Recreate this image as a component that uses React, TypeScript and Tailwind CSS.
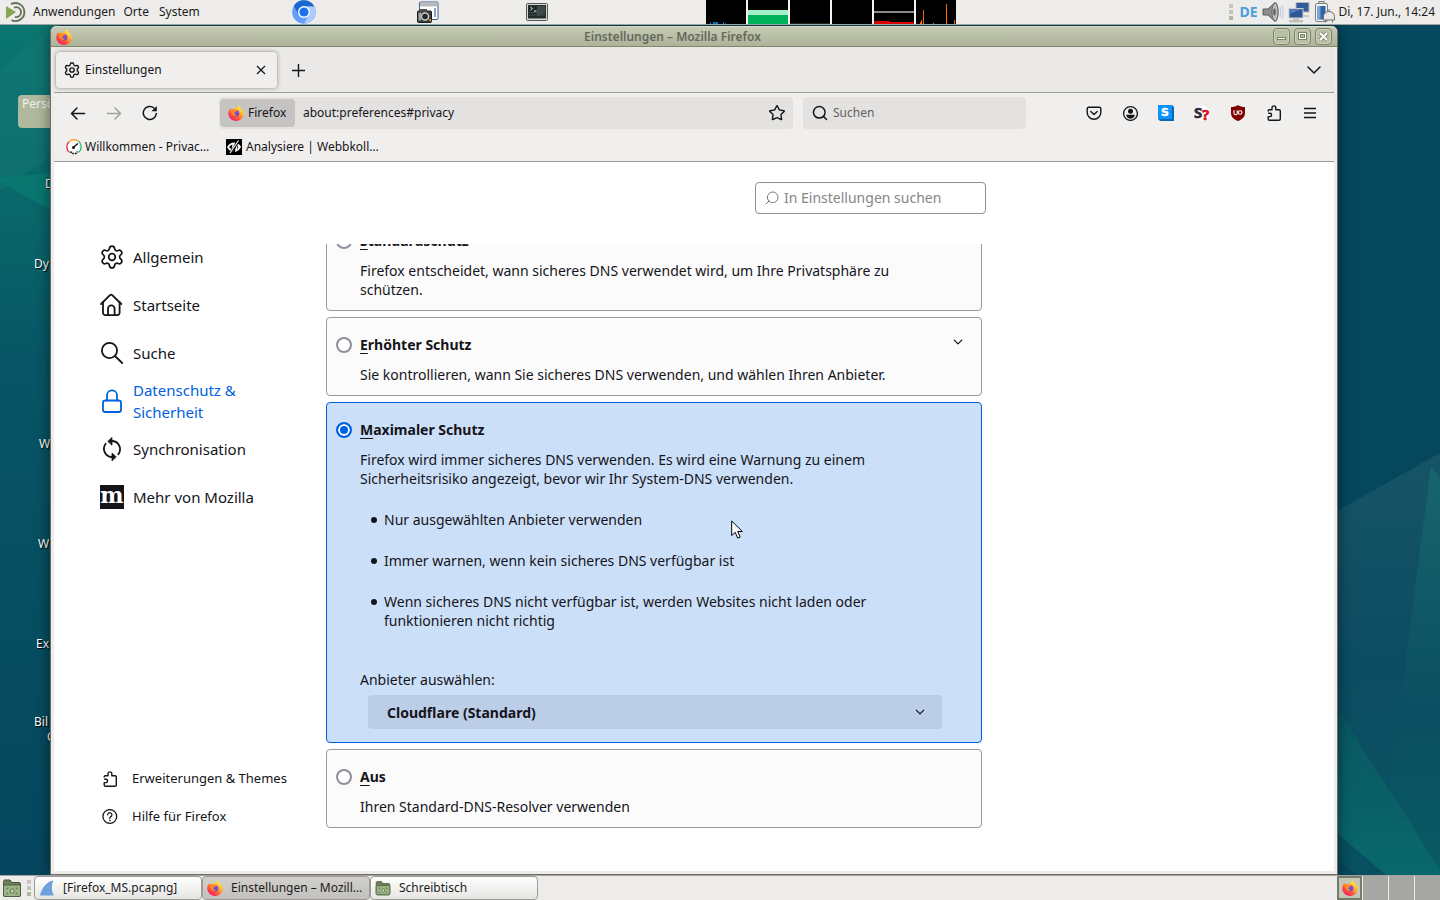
import type { ReactNode } from "react";
import { Search, Settings, Star } from "lucide-react";

function FirefoxLogo({ className }: { className: string }) {
  return (
    <svg viewBox="0 0 16 16" className={className} aria-hidden="true">
      <defs>
        <linearGradient id="fxBody" x1="0.85" y1="0.1" x2="0.2" y2="0.95">
          <stop offset="0" stopColor="#fff44f" />
          <stop offset="0.35" stopColor="#ffb02a" />
          <stop offset="0.65" stopColor="#ff5b36" />
          <stop offset="1" stopColor="#f5156c" />
        </linearGradient>
        <linearGradient id="fxGlobe" x1="0.7" y1="0" x2="0.3" y2="1">
          <stop offset="0" stopColor="#a049e0" />
          <stop offset="1" stopColor="#5141cf" />
        </linearGradient>
      </defs>
      <path
        d="M10.6 0c.3 1.300 1 2 1.900 2.900 1.700 1.500 3.400 3.300 3.400 5.700A7.800 7.400 0 0 1 .2 8.600C.2 6.500 1 4.800 2.200 3.200l.3 1.300 1-1.500L4 4.400c.6-.3 1.300-.4 2-.3C6.800 3.200 8.700 3.100 9 2.200 9.200 1.300 10 .6 10.600 0z"
        fill="url(#fxBody)"
      />
      <circle cx="8" cy="8.200" r="3.300" fill="url(#fxGlobe)" />
      <path
        d="M3.200 4.500c1.200-.6 2.900-.5 3.800.4 1 .1 1.900.2 2 .5 0 .6-1.100.9-1.400 1.300-.3.400-.3 1-1.300 1.100 0 1.600 1.700 2.500 3.300 1.700-1.600 2.300-5.200 1.600-6.100-1.200C3 7.400 2.600 5.500 3.200 4.500z"
        fill="#ff8a1e"
      />
      <path d="M9.300 3.200c2.600.9 4 3.300 3.300 5.700.1-1.500-.7-2.700-1.800-3.300-1-.5-1.700-1.300-1.500-2.400z" fill="#ffd23c" />
    </svg>
  );
}

function PuzzleIcon({ className }: { className: string }) {
  return (
    <svg viewBox="0 0 16 16" className={className} fill="none" stroke="currentColor" strokeWidth="1.400" strokeLinejoin="round" aria-hidden="true">
      <path d="M2.200 6.600V5.700a1 1 0 0 1 1-1H6V2.800a1.900 1.900 0 0 1 3.800 0v1.900h3.200a1.300 1.300 0 0 1 1.300 1.300v8a1.300 1.300 0 0 1-1.300 1.300H3.500A1.300 1.300 0 0 1 2.200 14v-2.400h1.700a1.650 1.650 0 0 0 0-3.300H2.200" />
    </svg>
  );
}

function Chevron({ className }: { className: string }) {
  return (
    <svg viewBox="0 0 16 16" className={className} fill="none" stroke="currentColor" strokeWidth="1.500" strokeLinecap="round" strokeLinejoin="round" aria-hidden="true">
      <path d="M2 5l6 6 6-6" />
    </svg>
  );
}

function FolderIcon({ className }: { className: string }) {
  return (
    <svg viewBox="0 0 20 20" className={className} aria-hidden="true">
      <path d="M1.500 3.500a1.500 1.500 0 0 1 1.500-1.500h5l2 2.500h7a1.500 1.500 0 0 1 1.500 1.500v11a1.500 1.500 0 0 1-1.500 1.500H3A1.500 1.500 0 0 1 1.500 17z" fill="#6c8058" stroke="#44543a" />
      <rect x="1.500" y="7" width="17" height="11.500" rx="1.500" fill="#9db585" stroke="#4e6042" />
      <path d="M5 11.500V10h1.500M13.500 10H15v1.500M15 14.500V16h-1.500M6.500 16H5v-1.500" fill="none" stroke="#5f7450" />
      <rect x="8.500" y="11" width="3.500" height="4" rx="1" fill="#c5d6b2" stroke="#5f7450" />
    </svg>
  );
}

function Wallpaper() {
  return (
    <svg viewBox="0 0 1440 850" preserveAspectRatio="none" className="absolute inset-0 h-full w-full" aria-hidden="true">
      <defs>
        <linearGradient id="wpLeft" x1="0" y1="0" x2="0" y2="1">
          <stop offset="0" stopColor="#0a7670" />
          <stop offset="0.2" stopColor="#09686a" />
          <stop offset="0.4" stopColor="#075565" />
          <stop offset="0.75" stopColor="#064c60" />
          <stop offset="1" stopColor="#05465e" />
        </linearGradient>
        <linearGradient id="wpHill" x1="0" y1="0" x2="0" y2="1">
          <stop offset="0" stopColor="#175467" />
          <stop offset="0.5" stopColor="#0c4c62" />
          <stop offset="1" stopColor="#0a5362" />
        </linearGradient>
        <linearGradient id="wpPeak" x1="0" y1="0" x2="0" y2="1">
          <stop offset="0" stopColor="#17656d" />
          <stop offset="0.6" stopColor="#0a4f62" />
          <stop offset="1" stopColor="#0a5a64" />
        </linearGradient>
        <linearGradient id="wpFoot" x1="0" y1="0" x2="0" y2="1">
          <stop offset="0" stopColor="#0a5562" />
          <stop offset="1" stopColor="#08686a" />
        </linearGradient>
      </defs>
      <rect width="1440" height="850" fill="#05475d" />
      <rect width="60" height="850" fill="url(#wpLeft)" />
      <path d="M0 45 55 0H60V125L0 165z" fill="#1b7c78" opacity="0.35" />
      <path d="M0 153 60 147V190L0 157z" fill="#0a7a70" opacity="0.8" />
      <path d="M1330 490 1440 428V850H1330z" fill="url(#wpHill)" />
      <path d="M1431 441 1440 453V850H1380L1395 720z" fill="url(#wpPeak)" />
      <path d="M1330 670 1349 702 1440 845V850H1330z" fill="url(#wpFoot)" />
      <path d="M1330 802 1386 850H1330z" fill="#075061" />
      <path d="M1330 831 1358 850H1330z" fill="#06475c" />
    </svg>
  );
}

const desktopLabels = [
  { text: "D", place: "left-[45px] top-[151px]" },
  { text: "Dy", place: "left-[34px] top-[231px]" },
  { text: "W", place: "left-[39px] top-[411px]" },
  { text: "W", place: "left-[38px] top-[511px]" },
  { text: "Ex", place: "left-[36px] top-[611px]" },
  { text: "Bil", place: "left-[34px] top-[689px]" },
  { text: "C", place: "left-[47px] top-[704px]" },
];

function Grip() {
  return (
    <span className="flex w-1 flex-col gap-0.5" aria-hidden="true">
      <span className="h-1 bg-[#c6c5c2]" />
      <span className="h-1 bg-[#c2c6b8]" />
      <span className="h-1 bg-[#b2b89f]" />
    </span>
  );
}

function SystemMonitor() {
  return (
    <svg viewBox="0 0 250 24" className="ml-[158px] h-6 w-[250px]" shapeRendering="crispEdges" role="img" aria-label="Systemmonitor">
      <rect width="250" height="24" fill="#f4f3f2" />
      {[0, 42, 84, 126, 168, 210].map((x) => (
        <rect key={x} x={x} width="40" height="24" fill="#000" />
      ))}
      <path d="M4 22h1v2H4zM7 22h4v2H7zM11 22h1v2h-1zM17 22h1v2h-1zM19 23h1v1h-1z" fill="#0b74b8" />
      <rect x="42" y="10" width="40" height="5" fill="#a5efc8" />
      <rect x="42" y="15" width="40" height="9" fill="#00b35b" />
      <rect x="84" y="23" width="40" height="1" fill="#2a2418" />
      <rect x="168" y="11" width="40" height="2" fill="#8a8a8a" />
      <path d="M168 21h16v1h24v2h-40z" fill="#dd0000" />
      <path d="M217 10h1v14h-1zM240 4h1v20h-1zM215 20h1v4h-1zM227 23h1v1h-1zM248 20h1v4h-1zM214 22h1v2h-1z" fill="#f96a00" />
    </svg>
  );
}

function TopPanel() {
  return (
    <header className="flex h-[25px] shrink-0 items-center border-b border-[#a3a29f] bg-[#edecea] text-xs text-[#1c1c1c]">
      <nav className="flex w-[292px] items-center pl-1.5" aria-label="Hauptmenü">
        <svg viewBox="0 0 20 20" className="mr-[7px] h-5 w-5" fill="none" aria-hidden="true">
          <path d="M0 4l10 6-10 7z" fill="#87a556" />
          <path d="M5 2.200A9 9 0 1 1 5.500 18.200" stroke="#66755a" strokeWidth="1.900" />
          <path d="M8 5.600A5 5 0 1 1 9 15" stroke="#66755a" strokeWidth="1.900" />
        </svg>
        <button className="mr-2">Anwendungen</button>
        <button className="mr-2.5">Orte</button>
        <button>System</button>
      </nav>
      <button aria-label="Chromium">
        <svg viewBox="0 0 24 24" className="h-6 w-6" aria-hidden="true">
          <circle cx="12" cy="12" r="11.800" fill="#669df6" />
          <path d="M1.800 6A11.800 11.800 0 0 1 22.300 6.500L12 6.300 6.800 14.500z" fill="#1967d2" />
          <path d="M22.300 6.500A11.800 11.800 0 0 1 12 23.800L17 14.800 15.500 6.500z" fill="#aecbfa" />
          <circle cx="12" cy="12" r="6" fill="#fff" />
          <circle cx="12" cy="12" r="4.600" fill="#1a73e8" />
        </svg>
      </button>
      <button className="ml-[101px]" aria-label="Bildschirmfoto">
        <svg viewBox="0 0 22 22" className="h-[22px] w-[22px]" aria-hidden="true">
          <rect x="2.500" y="1" width="18.500" height="17.500" rx="1" fill="#fff" stroke="#3c6197" />
          <rect x="3" y="1.500" width="17.500" height="4" fill="#b9bcba" />
          <path d="M17 7v9h2V7z" fill="#8aa3c2" />
          <rect x="0.500" y="10" width="14" height="11.500" rx="1" fill="#3c3c3a" stroke="#1e1e1e" />
          <rect x="3" y="8" width="7" height="3" fill="#4d4d4b" />
          <circle cx="8" cy="15.500" r="4.300" fill="#c9cbca" />
          <circle cx="8" cy="15.500" r="2.800" fill="#26282a" />
          <rect x="1.500" y="11.500" width="2.500" height="8" fill="#a3a5a2" />
          <rect x="12.500" y="18" width="1.500" height="2" fill="#f2a32b" />
        </svg>
      </button>
      <button className="ml-[87px]" aria-label="Terminal">
        <svg viewBox="0 0 22 18" className="h-[18px] w-[22px]" aria-hidden="true">
          <rect x="0.500" y="0.500" width="21" height="17" rx="1" fill="#d6d8d4" stroke="#535550" />
          <rect x="2.500" y="2.500" width="17" height="12.500" fill="#1f2a2a" stroke="#2c2e2c" />
          <path d="M11 3h8v7l-8 4z" fill="#3d4b4a" />
          <path d="M4.500 4l2 1.500-2 1.500M8 8h2.500" stroke="#e8ebe8" fill="none" />
          <path d="M3 9.500h16M3 12h16" stroke="#3f4f4e" />
        </svg>
      </button>
      <SystemMonitor />
      <div className="ml-auto flex items-center pr-[5px]">
        <Grip />
        <span className="ml-1.5 w-[19px] text-sm font-bold text-[#4a9fdc]">DE</span>
        <svg viewBox="0 0 22 22" className="ml-1 h-[22px] w-[22px]" aria-label="Lautstärke" role="img">
          <path d="M1 8h5l7-6.500c2 1 3 5 3 9.500s-1 8.500-3 9.500L6 14H1z" fill="#8d8d8b" stroke="#5d5d5b" />
          <ellipse cx="13" cy="11" rx="3" ry="9" fill="#bdbdbb" stroke="#6b6b69" />
          <ellipse cx="12.500" cy="11" rx="1.400" ry="3.500" fill="#6b6b69" />
          <path d="M18 6q1.500 5 0 10M20 4q2.500 7 0 14" fill="none" stroke="#b9cbe2" />
        </svg>
        <svg viewBox="0 0 22 22" className="ml-1 h-[22px] w-[22px]" aria-label="Netzwerk" role="img">
          <rect x="8" y="1.500" width="13" height="9.500" fill="#2f5b9b" stroke="#b9bab8" />
          <path d="M11 14h10v2H11z" fill="#c9cac8" />
          <rect x="1" y="7.500" width="14" height="9.500" fill="#2c5694" stroke="#cdcecc" />
          <path d="M1.500 8h13L1.500 13z" fill="#4f7cb9" />
          <path d="M5 17.500h6V19h4v2.500H1V19h4z" fill="#bfc0be" />
        </svg>
        <svg viewBox="0 0 22 22" className="ml-1 h-[22px] w-[22px]" aria-label="Akku" role="img">
          <rect x="5" y="0.500" width="5" height="3" fill="#dcdddb" stroke="#7f807e" />
          <rect x="1.500" y="2.500" width="12" height="18" rx="1.500" fill="#f3f4f3" stroke="#7f807e" />
          <rect x="3.500" y="5" width="8" height="13.500" fill="#2f65a8" />
          <path d="M3.500 5h3v13.500h-3z" fill="#7ba4d3" />
          <path d="M9.500 19v-3.500a5.500 5 0 0 1 11 0V19zM11.500 19v2.500M18.500 19v2.500M15 10V8" fill="#e7e8e6" stroke="#6f706e" />
        </svg>
        <time className="ml-0.5">Di, 17. Jun., 14:24</time>
      </div>
    </header>
  );
}

function TitleButton({ label, children }: { label: string; children: ReactNode }) {
  return (
    <button aria-label={label} className="flex h-[17px] w-[17px] items-center justify-center rounded border border-[#7c8468] bg-[#b9bfa5] shadow-[inset_0_0_0_1px_#ccd1bd]">
      <svg viewBox="0 0 13 13" className="h-[13px] w-[13px]" fill="none" aria-hidden="true">
        {children}
      </svg>
    </button>
  );
}

function TitleBar() {
  return (
    <div className="flex h-[21px] shrink-0 items-center rounded-t-md border-b border-t border-b-[#7f8768] border-t-[#d8dccb] bg-linear-to-b from-[#c6cab5] to-[#adb399] px-[5px]">
      <FirefoxLogo className="h-4 w-4" />
      <h1 className="flex-1 text-center text-xs font-semibold text-[#65695b]">Einstellungen – Mozilla Firefox</h1>
      <div className="flex gap-1">
        <TitleButton label="Minimieren">
          <rect x="2.500" y="7.500" width="8" height="2" fill="#fff" stroke="#7c8468" />
        </TitleButton>
        <TitleButton label="Maximieren">
          <rect x="2.500" y="2.500" width="8" height="7" fill="#fff" stroke="#7c8468" />
          <rect x="4.500" y="4.500" width="4" height="3" fill="#b9bfa5" stroke="#7c8468" />
        </TitleButton>
        <TitleButton label="Schließen">
          <path d="M3 3l7 7M10 3l-7 7" stroke="#7c8468" strokeWidth="3.800" />
          <path d="M3 3l7 7M10 3l-7 7" stroke="#fff" strokeWidth="2" />
        </TitleButton>
      </div>
    </div>
  );
}

function TabStrip() {
  return (
    <div className="flex h-[46px] shrink-0 items-center border-b border-[#9b9b97] bg-[#eae9e7] pl-0.5 pr-3 pt-px">
      <div className="flex h-9 w-[221px] items-center rounded bg-[#f0efed] px-2 shadow-[0_0_4px_rgba(0,0,0,0.4)]">
        <Settings viewBox="1 1 22 22" className="h-4 w-4" strokeWidth={1.900} />
        <span className="ml-[5px] flex-1 text-xs">Einstellungen</span>
        <button aria-label="Tab schließen" className="flex h-4 w-4 items-center justify-center">
          <svg viewBox="0 0 10 10" className="h-[10px] w-[10px]" stroke="currentColor" strokeWidth="1.200" aria-hidden="true">
            <path d="M1 1l8 8M9 1L1 9" />
          </svg>
        </button>
      </div>
      <button aria-label="Neuer Tab" className="ml-[15px]">
        <svg viewBox="0 0 13 13" className="h-[13px] w-[13px]" stroke="currentColor" strokeWidth="1.400" aria-hidden="true">
          <path d="M6.500 0v13M0 6.500h13" />
        </svg>
      </button>
      <button aria-label="Alle Tabs auflisten" className="ml-auto">
        <Chevron className="h-4 w-4" />
      </button>
    </div>
  );
}

function ToolButton({ label, children }: { label: string; children: ReactNode }) {
  return (
    <button aria-label={label} className="flex h-8 w-9 items-center justify-center">
      {children}
    </button>
  );
}

function NavBar() {
  return (
    <div className="flex h-10 shrink-0 items-center bg-[#f0efed] px-1.5 text-xs">
      <ToolButton label="Zurück">
        <svg viewBox="0 0 16 16" className="h-4 w-4" fill="none" stroke="currentColor" strokeWidth="1.500" strokeLinecap="round" strokeLinejoin="round" aria-hidden="true">
          <path d="M14.500 8.500H1.700M7 3L1.500 8.500 7 14" />
        </svg>
      </ToolButton>
      <ToolButton label="Vor">
        <svg viewBox="0 0 16 16" className="h-4 w-4 text-[#a0a09e]" fill="none" stroke="currentColor" strokeWidth="1.500" strokeLinecap="round" strokeLinejoin="round" aria-hidden="true">
          <path d="M1.500 8.500h12.800M9 3l5.500 5.500L9 14" />
        </svg>
      </ToolButton>
      <ToolButton label="Neu laden">
        <svg viewBox="0 0 16 16" className="h-4 w-4" fill="none" stroke="currentColor" strokeWidth="1.500" aria-hidden="true">
          <path d="M14.300 8.500A6.500 6.500 0 1 1 12 3" strokeLinecap="round" />
          <path d="M14.800 1v5.300H9.500z" fill="currentColor" stroke="none" />
        </svg>
      </ToolButton>
      <div className="ml-[51px] flex h-8 flex-1 items-center rounded bg-[#e3e2e0] px-px">
        <button className="flex h-7 w-[75px] items-center gap-1 rounded bg-[#c5c4c2] pl-2">
          <FirefoxLogo className="h-4 w-4" />
          Firefox
        </button>
        <input aria-label="Adresse" defaultValue="about:preferences#privacy" className="ml-2 min-w-0 flex-1 bg-transparent outline-none" />
        <button aria-label="Lesezeichen setzen" className="mr-[7px]">
          <Star viewBox="1 1 22 22" className="h-4 w-4" strokeWidth={1.900} />
        </button>
      </div>
      <div className="ml-2.5 flex h-8 w-[223px] items-center rounded bg-[#e3e2e0] pl-[9px]">
        <Search viewBox="1 1 22 22" className="h-4 w-4" strokeWidth={2} />
        <input aria-label="Suchen" placeholder="Suchen" className="ml-[5px] min-w-0 flex-1 bg-transparent outline-none placeholder:text-[#62615f]" />
      </div>
      <div className="ml-[50px] flex">
        <ToolButton label="Pocket">
          <svg viewBox="0 0 16 16" className="h-4 w-4" fill="none" stroke="currentColor" strokeWidth="1.400" strokeLinecap="round" strokeLinejoin="round" aria-hidden="true">
            <path d="M2.700 2.200h10.600a1.500 1.500 0 0 1 1.500 1.500v3.700a6.800 6.800 0 0 1-13.600 0V3.700a1.500 1.500 0 0 1 1.500-1.500z" />
            <path d="M4.800 6.500L8 9.500l3.200-3" />
          </svg>
        </ToolButton>
        <ToolButton label="Konto">
          <svg viewBox="0 0 16 16" className="h-4 w-4" aria-hidden="true">
            <circle cx="8.500" cy="8.500" r="6.900" fill="none" stroke="currentColor" strokeWidth="1.300" />
            <circle cx="8.500" cy="6.300" r="2.500" fill="currentColor" />
            <path d="M4.200 9.800h8.600c0 2.300-1.900 3.900-4.300 3.900s-4.300-1.600-4.300-3.900z" fill="currentColor" />
          </svg>
        </ToolButton>
        <ToolButton label="Startpage">
          <svg viewBox="0 0 16 16" className="h-4 w-4 overflow-visible" aria-hidden="true">
            <path d="M0 0h14l2 2v14H2l-2-2z" fill="#0768b5" />
            <rect width="14" height="14" fill="#0a94ff" />
            <text x="7" y="11" textAnchor="middle" fontFamily="DejaVu Sans" fontWeight="bold" fontSize="11" fill="#fff" stroke="#fff" strokeWidth="0.400">S</text>
          </svg>
        </ToolButton>
        <ToolButton label="Seitensuche">
          <svg viewBox="0 0 16 16" className="h-4 w-4 overflow-visible" aria-hidden="true">
            <circle cx="8" cy="8" r="7.500" fill="#fff" />
            <text x="0" y="13" fontFamily="Noto Sans" fontWeight="bold" fontSize="15" fill="#2b2a3c" stroke="#2b2a3c" strokeWidth="0.600">S</text>
            <text x="8" y="14.500" fontFamily="Noto Sans" fontWeight="bold" fontSize="15" fill="#dd1020" stroke="#dd1020" strokeWidth="0.600">?</text>
          </svg>
        </ToolButton>
        <ToolButton label="uBlock Origin">
          <svg viewBox="0 0 16 16" className="h-4 w-4" aria-hidden="true">
            <path d="M8 0c2 1.500 4.500 2 7 2v6c0 4-3 6.500-7 8-4-1.500-7-4-7-8V2c2.500 0 5-.5 7-2z" fill="#800000" />
            <path d="M4 5.200v3a1.600 1.600 0 0 0 3.200 0v-3M7.200 8V5.200" fill="none" stroke="#fff" strokeWidth="1.100" />
            <circle cx="10.200" cy="7.500" r="1.800" fill="none" stroke="#fff" strokeWidth="1.100" />
          </svg>
        </ToolButton>
        <ToolButton label="Erweiterungen">
          <PuzzleIcon className="h-4 w-4" />
        </ToolButton>
        <ToolButton label="Menü">
          <svg viewBox="0 0 12 12" className="h-3 w-3" stroke="currentColor" strokeWidth="1.300" aria-hidden="true">
            <path d="M0 1.500h12M0 6h12M0 10.500h12" />
          </svg>
        </ToolButton>
      </div>
    </div>
  );
}

function BookmarksBar() {
  return (
    <div className="flex h-[29px] shrink-0 items-center border-b border-[#9b9b97] bg-[#f0efed] pl-3 text-xs">
      <a href="#willkommen" className="flex w-40 items-center gap-[3px]">
        <svg viewBox="0 0 16 16" className="h-4 w-4" fill="none" strokeWidth="1.400" aria-hidden="true">
          <circle cx="8" cy="8" r="7" fill="#fff" />
          <path d="M3.500 13.500A7.200 7.200 0 0 1 3 2.800" stroke="#e2333f" />
          <path d="M3 2.800a7.200 7.200 0 0 1 9.500-.6" stroke="#f5a623" />
          <path d="M12.500 2.200a7.200 7.200 0 0 1 0 11.300" stroke="#35b56a" />
          <path d="M7 8.500l5-4" stroke="#111" strokeWidth="1.500" />
          <circle cx="7.500" cy="8.500" r="1.500" fill="#111" />
          <path d="M4.500 12.500l1.500 2h4l1.500-2" stroke="#222" strokeWidth="1.600" strokeDasharray="2 0.700" />
        </svg>
        Willkommen - Privac…
      </a>
      <a href="#analysiere" className="flex items-center gap-1">
        <svg viewBox="0 0 16 16" className="h-4 w-4" aria-hidden="true">
          <rect width="16" height="16" fill="#000" />
          <path d="M1 8q3-5 8-4.500L7 13Q3 12 1 8zM10 4q4 1 5 4-2 4-6 5z" fill="#fff" />
          <path d="M3 8q2-2.500 3.500-2.500L5.500 10.500zM11.500 6q1.500 2-.5 5z" fill="#000" />
          <path d="M13 1.500L4 14.500" stroke="#000" strokeWidth="2.400" />
          <path d="M12.500 1.500L4 14" stroke="#fff" strokeWidth="1.100" />
        </svg>
        Analysiere | Webbkoll…
      </a>
    </div>
  );
}

const stroke = {
  viewBox: "0 0 24 24",
  className: "h-6 w-6 shrink-0",
  fill: "none",
  stroke: "currentColor",
  strokeWidth: 1.8,
  strokeLinecap: "round",
  strokeLinejoin: "round",
  "aria-hidden": true,
} as const;

const categories: { label: string; active?: boolean; icon: ReactNode }[] = [
  { label: "Allgemein", icon: <Settings viewBox="1 1 22 22" className="h-6 w-6 shrink-0" strokeWidth={1.600} /> },
  {
    label: "Startseite",
    icon: (
      <svg {...stroke}>
        <path d="M1.100 11 9.700 2.300a2 2 0 0 1 2.800 0L21.300 11" />
        <path d="M3 9v10.800a2.300 2.300 0 0 0 2.300 2.300h12a2.300 2.300 0 0 0 2.300-2.300V9" />
        <path d="M8 22v-6.300a3.300 3.300 0 0 1 6.600 0V22" />
      </svg>
    ),
  },
  {
    label: "Suche",
    icon: (
      <svg {...stroke}>
        <circle cx="9.500" cy="9.500" r="7.600" />
        <path d="M15 15l7.200 7" />
      </svg>
    ),
  },
  {
    label: "Datenschutz & Sicherheit",
    active: true,
    icon: (
      <svg {...stroke}>
        <rect x="3" y="11.500" width="18" height="11.500" rx="2.300" />
        <path d="M7 11.500V6.300a5 5 0 0 1 10 0v5.200" />
      </svg>
    ),
  },
  {
    label: "Synchronisation",
    icon: (
      <svg {...stroke}>
        <path d="M18.300 17.200A8.200 8.200 0 0 0 12.500 4M5.700 6.800A8.200 8.200 0 0 0 11.500 20" />
        <path d="M8 4.200l4-3.700v7.400zM16 19.800l-4-3.700v7.400z" fill="currentColor" strokeWidth="0.800" />
      </svg>
    ),
  },
  {
    label: "Mehr von Mozilla",
    icon: (
      <svg viewBox="0 0 24 24" className="h-6 w-6 shrink-0 overflow-visible" aria-hidden="true">
        <rect width="24" height="24" fill="#15141a" />
        <text x="12" y="18" textAnchor="middle" fontFamily="DejaVu Serif" fontWeight="bold" fontSize="22" fill="#fff">m</text>
      </svg>
    ),
  },
];

function Sidebar() {
  return (
    <aside className="flex w-[272px] shrink-0 flex-col pb-[35px] pl-[46px] pt-[71px]">
      <nav aria-label="Kategorien">
        {categories.map((c) => (
          <a
            key={c.label}
            href={"#" + c.label}
            className={c.active ? "flex h-12 w-40 items-center gap-[9px] text-[15px]/[22px] text-[#0061e0]" : "flex h-12 w-40 items-center gap-[9px] text-[15px]/[22px]"}
          >
            {c.icon}
            {c.label}
          </a>
        ))}
      </nav>
      <div className="mt-auto text-[13px]">
        <a href="#addons" className="flex h-[38px] items-center gap-[14px] pl-0.5">
          <PuzzleIcon className="h-4 w-4" />
          Erweiterungen &amp; Themes
        </a>
        <a href="#hilfe" className="flex h-[38px] items-center gap-[14px] pl-0.5">
          <svg viewBox="0 0 16 16" className="h-4 w-4" fill="none" stroke="currentColor" strokeWidth="1.300" strokeLinecap="round" aria-hidden="true">
            <circle cx="7.800" cy="7.500" r="6.900" />
            <path d="M5.700 5.800a2.100 2.100 0 1 1 3.200 1.800c-.8.5-1.100.8-1.100 1.700" />
            <circle cx="7.800" cy="11.400" r="0.300" />
          </svg>
          Hilfe für Firefox
        </a>
      </div>
    </aside>
  );
}

function OptionCard({ id, title, text, checked = false, expandable = false, children }: {
  id: string;
  title: string;
  text: string;
  checked?: boolean;
  expandable?: boolean;
  children?: ReactNode;
}) {
  return (
    <section className={checked ? "rounded border border-[#0061e0] bg-[#cbdff8] pl-[9px] pr-[39px] pt-[17px]" : "rounded border border-[#9b9b9b] bg-[#fbfbfb] pb-[11px] pl-[9px] pr-[15px] pt-[17px]"}>
      <div className="flex h-[19px] items-center gap-2">
        <input
          type="radio"
          name="dns"
          id={id}
          defaultChecked={checked}
          className="h-4 w-4 shrink-0 appearance-none rounded-full border-2 border-[#8f8f9d] bg-white checked:border-[#0061e0] checked:bg-[#0061e0] checked:shadow-[inset_0_0_0_2px_#fff]"
        />
        <label htmlFor={id} className="flex-1 font-bold">
          <span className="underline underline-offset-[3px]">{title[0]}</span>
          {title.slice(1)}
        </label>
        {expandable && (
          <button aria-label="Details anzeigen" className="pb-1.5">
            <Chevron className="h-4 w-4 stroke-2 p-[3px]" />
          </button>
        )}
      </div>
      <p className="ml-6 mt-[11px] max-w-[560px]">{text}</p>
      {children}
    </section>
  );
}

const strictNotes = [
  "Nur ausgewählten Anbieter verwenden",
  "Immer warnen, wenn kein sicheres DNS verfügbar ist",
  "Wenn sicheres DNS nicht verfügbar ist, werden Websites nicht laden oder funktionieren nicht richtig",
];

function Preferences() {
  return (
    <main className="flex max-w-[660px] flex-1 flex-col pt-5">
      <div className="mb-[30px] flex h-8 w-[231px] shrink-0 items-center gap-1 self-end rounded border border-[#8f8f9d] bg-white pl-2">
        <Search className="h-4 w-4 -scale-x-100 text-[#77777a]" strokeWidth={1.500} />
        <input aria-label="In Einstellungen suchen" placeholder="In Einstellungen suchen" className="min-w-0 flex-1 bg-transparent text-sm outline-none placeholder:text-[#85858a]" />
      </div>
      <div className="mr-1 min-h-0 flex-1 overflow-hidden">
        <div className="-mt-[31px] flex flex-col gap-1.5 text-sm/[19px]">
          <OptionCard id="standard" title="Standardschutz" text="Firefox entscheidet, wann sicheres DNS verwendet wird, um Ihre Privatsphäre zu schützen." />
          <OptionCard id="erhoeht" title="Erhöhter Schutz" text="Sie kontrollieren, wann Sie sicheres DNS verwenden, und wählen Ihren Anbieter." expandable />
          <OptionCard
            id="maximal"
            title="Maximaler Schutz"
            text="Firefox wird immer sicheres DNS verwenden. Es wird eine Warnung zu einem Sicherheitsrisiko angezeigt, bevor wir Ihr System-DNS verwenden."
            checked
          >
            <ul className="ml-[35px] mt-[22px] flex max-w-[530px] flex-col gap-[22px]">
              {strictNotes.map((note) => (
                <li key={note} className="flex gap-[7px] before:mt-[7px] before:h-1.5 before:w-1.5 before:shrink-0 before:rounded-full before:bg-[#15141a]">
                  {note}
                </li>
              ))}
            </ul>
            <div className="ml-6 mt-10 pb-[13px]">
              <label htmlFor="anbieter" className="block">Anbieter auswählen:</label>
              <div className="relative ml-2 mt-1.5">
                <select id="anbieter" className="h-[34px] w-full appearance-none rounded bg-[#bccde8] pl-[19px] font-bold outline-none">
                  <option>Cloudflare (Standard)</option>
                </select>
                <Chevron className="pointer-events-none absolute right-[14px] top-[9px] h-4 w-4 stroke-2 p-[3px]" />
              </div>
            </div>
          </OptionCard>
          <OptionCard id="aus" title="Aus" text="Ihren Standard-DNS-Resolver verwenden" />
        </div>
      </div>
    </main>
  );
}

function BottomPanel() {
  const task = "flex h-6 w-[168px] items-center rounded-sm border border-[#9c9a96] px-1 text-left";
  return (
    <footer className="flex h-[25px] shrink-0 items-center border-t border-[#a3a29f] bg-[#edecea] text-xs text-[#1c1c1c]">
      <button aria-label="Schreibtisch anzeigen" className="px-0.5">
        <FolderIcon className="h-5 w-5" />
      </button>
      <span className="mx-[3px]">
        <Grip />
      </span>
      <div className="flex">
        <button className={task + " bg-linear-to-b from-white to-[#e6e5e3]"}>
          <svg viewBox="0 0 16 16" className="h-4 w-4" aria-hidden="true">
            <path d="M1 15.500C3 7 8 1.500 14.500.5 12 5 12.500 11 15 15.500z" fill="#6da0dd" />
          </svg>
          <span className="ml-2">[Firefox_MS.pcapng]</span>
        </button>
        <button className={task + " bg-linear-to-b from-[#d2d0cc] to-[#c3c1bd]"}>
          <FirefoxLogo className="h-4 w-4" />
          <span className="ml-2">Einstellungen – Mozill…</span>
        </button>
        <button className={task + " bg-linear-to-b from-white to-[#e6e5e3]"}>
          <FolderIcon className="h-4 w-4" />
          <span className="ml-2">Schreibtisch</span>
        </button>
      </div>
      <div className="ml-auto flex h-full gap-px" aria-label="Arbeitsflächen">
        <button aria-label="Arbeitsfläche 1" className="flex w-[25px] items-center justify-center border-2 border-[#747b66] bg-[#c3c7b6]">
          <FirefoxLogo className="h-4 w-4" />
        </button>
        <button aria-label="Arbeitsfläche 2" className="w-[25px] bg-[#a6a6a4]" />
        <button aria-label="Arbeitsfläche 3" className="w-[25px] bg-[#a6a6a4]" />
        <button aria-label="Arbeitsfläche 4" className="w-[25px] bg-[#a6a6a4]" />
      </div>
    </footer>
  );
}

export default function App() {
  return (
    <div className="flex h-screen flex-col overflow-hidden font-['Noto_Sans',sans-serif]">
      <TopPanel />
      <div className="relative flex min-h-0 flex-1 overflow-hidden pl-[50px] pr-[102px] pt-px">
        <Wallpaper />
        <div className="absolute left-[18px] top-[70px] h-[33px] w-20 rounded bg-[#b0b99e] pl-1 text-xs/[18px] text-[#f2f3ee]">Persö</div>
        {desktopLabels.map((l) => (
          <span key={l.place} className={"absolute text-xs/4 text-white [text-shadow:1px_1px_1px_#000] " + l.place}>
            {l.text}
          </span>
        ))}
        <div className="relative flex flex-1 flex-col rounded-t-md border border-t-0 border-[#6f6d69] bg-[#edecea] shadow-[0_0_14px_rgba(0,0,0,0.5)]">
          <TitleBar />
          <div className="mx-[3px] mb-[3px] flex min-h-0 flex-1 flex-col text-[#15141a]">
            <TabStrip />
            <NavBar />
            <BookmarksBar />
            <div className="flex min-h-0 flex-1 bg-white">
              <Sidebar />
              <Preferences />
            </div>
          </div>
        </div>
        <svg viewBox="0 0 12 19" className="absolute left-[731px] top-[495px] h-[19px] w-3" aria-hidden="true">
          <path d="M.7 1v14.500l3.500-3.200 2.500 5.800 2.500-1-2.500-5.600h4.600z" fill="#fff" stroke="#000" />
        </svg>
      </div>
      <BottomPanel />
    </div>
  );
}
